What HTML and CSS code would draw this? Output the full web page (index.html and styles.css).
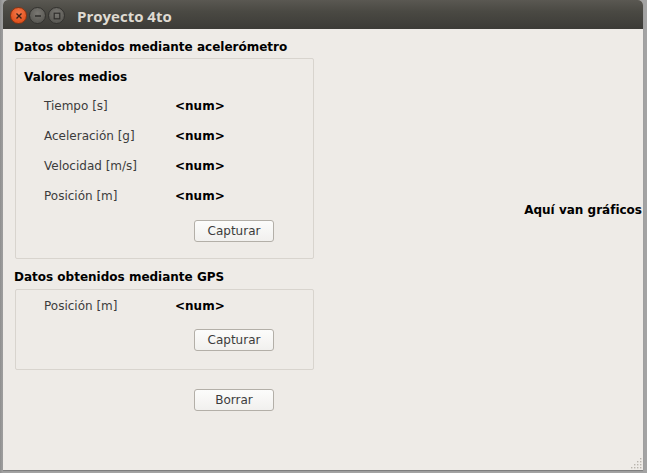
FILE: index.html
```html
<!DOCTYPE html>
<html lang="es">
<head>
<meta charset="utf-8">
<title>Proyecto 4to</title>
<link rel="stylesheet" href="styles.css">
</head>
<body>
<div class="window">
  <div class="titlebar">
    <div class="controls">
      <span class="ctl close"><svg width="8" height="8" viewBox="0 0 8 8"><path d="M1.5 1.5 L6.5 6.5 M6.5 1.5 L1.5 6.5" stroke="#3a2016" stroke-width="1.4"/></svg></span>
      <span class="ctl"><svg width="8" height="8" viewBox="0 0 8 8"><path d="M1 4 H7" stroke="#2f2e2b" stroke-width="1.4"/></svg></span>
      <span class="ctl"><svg width="8" height="8" viewBox="0 0 8 8"><rect x="1.2" y="1.2" width="5.6" height="5.6" fill="none" stroke="#2f2e2b" stroke-width="1.2"/></svg></span>
    </div>
    <div class="title">Proyecto 4to</div>
  </div>
  <div class="content">
    <div class="left">
      <div class="heading h1">Datos obtenidos mediante acelerómetro</div>
      <div class="group g1">
        <div class="group-title">Valores medios</div>
        <div class="row"><span class="label">Tiempo [s]</span><span class="value">&lt;num&gt;</span></div>
        <div class="row"><span class="label">Aceleración [g]</span><span class="value">&lt;num&gt;</span></div>
        <div class="row"><span class="label">Velocidad [m/s]</span><span class="value">&lt;num&gt;</span></div>
        <div class="row"><span class="label">Posición [m]</span><span class="value">&lt;num&gt;</span></div>
        <div class="btn-row"><button class="btn">Capturar</button></div>
      </div>
      <div class="heading h2">Datos obtenidos mediante GPS</div>
      <div class="group g2">
        <div class="row"><span class="label">Posición [m]</span><span class="value">&lt;num&gt;</span></div>
        <div class="btn-row"><button class="btn">Capturar</button></div>
      </div>
      <div class="btn-row outer"><button class="btn">Borrar</button></div>
    </div>
    <div class="right">
      <div class="graphs">Aquí van gráficos</div>
    </div>
  </div>
  <svg class="grip" width="12" height="12" viewBox="0 0 12 12">
    <g fill="#b9b5ae">
      <rect x="10" y="1" width="1.4" height="1.4"/>
      <rect x="10" y="4" width="1.4" height="1.4"/>
      <rect x="7" y="4" width="1.4" height="1.4"/>
      <rect x="10" y="7" width="1.4" height="1.4"/>
      <rect x="7" y="7" width="1.4" height="1.4"/>
      <rect x="4" y="7" width="1.4" height="1.4"/>
      <rect x="10" y="10" width="1.4" height="1.4"/>
      <rect x="7" y="10" width="1.4" height="1.4"/>
      <rect x="4" y="10" width="1.4" height="1.4"/>
      <rect x="1" y="10" width="1.4" height="1.4"/>
    </g>
  </svg>
</div>
</body>
</html>
```
FILE: styles.css
```css
html, body {
  margin: 0;
  padding: 0;
}
body {
  width: 647px;
  height: 473px;
  overflow: hidden;
  background: linear-gradient(to right, #8e8e8e 0, #a3a3a3 3px, #a3a3a3 100%);
  font-family: "DejaVu Sans", sans-serif;
  font-size: 12px;
  color: #3c3c3c;
}
.window {
  position: relative;
  margin-left: 3px;
  width: 640px;
  height: 470px;
  background: #eeebe7;
  display: flex;
  flex-direction: column;
  border-radius: 5px 5px 0 0;
  overflow: hidden;
  box-shadow: 0 1px 1px rgba(0,0,0,0.25);
}
.titlebar {
  height: 29px;
  flex: none;
  background: linear-gradient(to bottom, #5a5852 0, #4a4943 40%, #3c3b37 100%);
  display: flex;
  align-items: center;
  box-sizing: border-box;
  padding-top: 2px;
}
.controls {
  display: flex;
  gap: 2px;
  margin-left: 7px;
}
.ctl {
  width: 15px;
  height: 15px;
  border-radius: 50%;
  background: radial-gradient(circle at 50% 35%, #7a7873 0, #5c5b56 70%);
  border: 1px solid #33322f;
  display: flex;
  align-items: center;
  justify-content: center;
}
.ctl.close {
  background: radial-gradient(circle at 50% 35%, #f47a4c 0, #e2531f 70%);
  border-color: #8b3412;
}
.title {
  margin-left: 12px;
  font-family: "Open Sans", sans-serif;
  font-weight: bold;
  font-size: 15px;
  color: #dfdbd2;
}
.content {
  flex: 1;
  display: flex;
}
.left {
  width: 320px;
  flex: none;
  padding-left: 11px;
  padding-top: 11px;
  box-sizing: border-box;
}
.heading {
  font-weight: bold;
  color: #000;
  line-height: 15px;
  height: 15px;
}
.group {
  margin-left: 1px;
  margin-top: 3px;
  width: 299px;
  box-sizing: border-box;
  border: 1px solid #d8d4ce;
  border-radius: 2px;
}
.g1 {
  height: 201px;
  padding-top: 11px;
}
.g2 {
  height: 81px;
  padding-top: 1px;
  margin-top: 4px;
}
.h2 {
  margin-top: 11px;
}
.group-title {
  font-weight: bold;
  color: #000;
  line-height: 15px;
  height: 15px;
  padding-left: 8px;
  margin-bottom: 6px;
}
.row {
  display: flex;
  height: 30px;
  align-items: center;
  padding-left: 28px;
}
.label {
  width: 131px;
  color: #3c3c3c;
}
.value {
  font-weight: bold;
  color: #000;
}
.btn-row {
  padding-left: 178px;
  margin-top: 9px;
}
.g2 .btn-row {
  margin-top: 8px;
}
.btn-row.outer {
  padding-left: 180px;
  margin-top: 19px;
}
.btn {
  display: block;
  width: 80px;
  height: 22px;
  box-sizing: border-box;
  border: 1px solid #b3afa8;
  border-radius: 3px;
  background: linear-gradient(to bottom, #fcfcfb 0, #f1f0ee 100%);
  font-family: "DejaVu Sans", sans-serif;
  font-size: 12px;
  color: #3c3c3c;
  padding: 0;
  margin: 0;
}
.right {
  flex: 1;
  display: flex;
  justify-content: flex-end;
  padding-top: 174px;
}
.graphs {
  font-weight: bold;
  color: #000;
  line-height: 15px;
  height: 15px;
  margin-right: 1px;
}
.grip {
  position: absolute;
  right: 1px;
  bottom: 1px;
}
```
